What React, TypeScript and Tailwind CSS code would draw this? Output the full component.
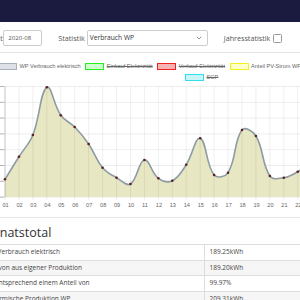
import React from "react";

const DX = 13.94;
const X0 = 5;
const TOP = 86.5;
const STEP = 15.8;
const OY = 84;

// measured y positions of each day (page coordinates)
const values = [
  179.3, 156.7, 135, 87.3, 115.3, 127, 144, 167.7, 177.7, 184, 160, 178.3, 180.7, 164.7, 138.3,
  175, 172.7, 130, 136, 176, 177.7, 171.7, 160, 150,
];

type Pt = { x: number; y: number };

function splinePath(pts: Pt[], t = 0.4) {
  const cps = pts.map((cur, i) => {
    const prev = pts[i - 1] ?? cur;
    const next = pts[i + 1] ?? cur;
    const d01 = Math.hypot(cur.x - prev.x, cur.y - prev.y);
    const d12 = Math.hypot(next.x - cur.x, next.y - cur.y);
    const s01 = d01 / (d01 + d12 || 1);
    const s12 = d12 / (d01 + d12 || 1);
    const fa = t * s01;
    const fb = t * s12;
    return {
      prev: { x: cur.x - fa * (next.x - prev.x), y: cur.y - fa * (next.y - prev.y) },
      next: { x: cur.x + fb * (next.x - prev.x), y: cur.y + fb * (next.y - prev.y) },
    };
  });
  let d = `M${pts[0].x},${pts[0].y}`;
  for (let i = 1; i < pts.length; i++) {
    const a = cps[i - 1].next;
    const b = cps[i].prev;
    d += ` C${a.x},${a.y} ${b.x},${b.y} ${pts[i].x},${pts[i].y}`;
  }
  return d;
}

function Chart() {
  const pts = values.map((v, i) => ({ x: X0 + i * DX, y: v - OY }));
  const line = splinePath(pts);
  const bottom = TOP + STEP * 7 - OY;
  const area = `${line} L${pts[pts.length - 1].x},${bottom} L${pts[0].x},${bottom} Z`;
  const grid = Array.from({ length: 8 }, (_, k) => TOP + k * STEP - OY);
  return (
    <svg width={300} height={128} className="block">
      {grid.map((y) => (
        <line key={y} x1={0} x2={300} y1={y} y2={y} stroke="rgba(0,0,0,0.1)" strokeWidth={0.7} />
      ))}
      <path d={area} fill="#e8e7c3" />
      {pts.map((p, i) => (
        <line key={i} x1={p.x} x2={p.x} y1={TOP - OY} y2={bottom + 3} stroke="rgba(0,0,0,0.09)" strokeWidth={0.7} />
      ))}
      <line x1={X0} x2={X0} y1={TOP - OY} y2={bottom} stroke="rgba(0,0,0,0.25)" strokeWidth={0.7} />
      {grid.map((y) => (
        <line key={"t" + y} x1={0} x2={4} y1={y} y2={y} stroke="rgba(0,0,0,0.35)" strokeWidth={0.7} />
      ))}
      <path d={line} fill="none" stroke="#8d9ca3" strokeWidth={1.6} />
      {pts.map((p, i) => (
        <circle key={"c" + i} cx={p.x} cy={p.y} r={1.3} fill="#5b1f25" />
      ))}
      {pts.slice(0, 22).map((p, i) => (
        <text
          key={"l" + i}
          x={p.x + 0.6}
          y={bottom + 10}
          textAnchor="middle"
          fontSize={5.6}
          fill="#666"
          fontFamily="'Liberation Sans', Arial, sans-serif"
        >
          {String(i + 1).padStart(2, "0")}
        </text>
      ))}
    </svg>
  );
}

function LegendItem({ label, box, border, off }: { label: string; box: string; border: string; off?: boolean }) {
  return (
    <div className="flex items-center gap-[2.5px] shrink-0">
      <span className={`w-[19px] h-[6.5px] border-[1.5px] ${box} ${border}`} />
      <span
        className={`font-['Liberation_Sans',Arial,sans-serif] text-[5.6px] leading-none text-[#666] ${off ? "line-through" : ""}`}
      >
        {label}
      </span>
    </div>
  );
}

export default function App() {
  const rows = [
    { l: "WP Verbrauch elektrisch", v: "189.25kWh", pad: "pl-0", bg: "bg-white" },
    { l: "davon aus eigener Produktion", v: "189.20kWh", pad: "pl-[5px]", bg: "bg-[#f6f6f6]" },
    { l: "entsprechend einem Anteil von", v: "99.97%", pad: "pl-[9px]", bg: "bg-white" },
    { l: "Thermische Produktion WP", v: "209.31kWh", pad: "pl-[2px]", bg: "bg-[#f6f6f6]" },
  ];
  return (
    <div className="w-[300px] h-[300px] overflow-hidden bg-white font-['Open_Sans',sans-serif] text-[#333]">
      <div className="h-[22px] bg-[#1b1a3f]" />

      {/* filter form */}
      <div className="h-[31px] border-b border-[#e5e5e5] flex items-center -ml-[19px] pt-[2px]">
        <span className="text-[7.2px] text-[#555]">Monat</span>
        <div className="ml-[0.5px] w-[39px] h-[16px] border border-[#ccc] rounded-[2px] flex items-center pl-[4px] text-[6.1px] text-[#555]">
          2020-08
        </div>
        <span className="ml-[16px] text-[7.2px] text-[#555]">Statistik</span>
        <div className="ml-[2px] w-[121px] h-[16px] border border-[#ccc] rounded-[2px] flex items-center justify-between pl-[2px] pr-[5px] text-[6.7px] text-[#333]">
          <span>Verbrauch WP</span>
          <svg width="6" height="4" viewBox="0 0 6 4">
            <path d="M0.8 0.8 L3 3 L5.2 0.8" fill="none" stroke="#777" strokeWidth="0.8" />
          </svg>
        </div>
        <span className="ml-[16px] text-[7.2px] text-[#555]">Jahresstatistik</span>
        <span className="ml-[3px] w-[9px] h-[9px] border border-[#999] rounded-[1.5px] bg-white" />
      </div>

      {/* legend */}
      <div className="h-[31px] flex flex-col pt-[8px]">
        <div className="flex items-center gap-[4.5px] -ml-[2px] h-[11px]">
          <LegendItem label="WP Verbrauch elektrisch" box="bg-[#dde1e6]" border="border-[#a8b0b8]" />
          <LegendItem label="Einkauf Elektrizität" box="bg-[#ccffcc]" border="border-[#22ee22]" off />
          <LegendItem label="Verkauf Elektrizität" box="bg-[#f7b3b3]" border="border-[#ee2222]" off />
          <LegendItem label="Anteil PV-Strom WP" box="bg-[#ffffc8]" border="border-[#f2f222]" />
        </div>
        <div className="flex items-center h-[11px] pl-[185px]">
          <LegendItem label="SGP" box="bg-[#c8f4fb]" border="border-[#33ddee]" off />
        </div>
      </div>

      <Chart />

      <div className="mt-[5px] border-t border-[#e5e5e5]" />

      <h3 className="-ml-[19px] h-[26px] flex items-center pt-[5px] text-[12.5px] text-[#333]">Monatstotal</h3>

      <table className="-ml-[14px] w-[330px] border-collapse text-[6.5px] text-[#444]">
        <tbody>
          {rows.map((r) => (
            <tr key={r.l} className={`${r.bg} h-[15.5px] border-t border-[#ddd]`}>
              <td className={`${r.pad} w-[218px] border-r border-[#ddd]`}>{r.l}</td>
              <td className="pl-[5px]">{r.v}</td>
            </tr>
          ))}
        </tbody>
      </table>
    </div>
  );
}
